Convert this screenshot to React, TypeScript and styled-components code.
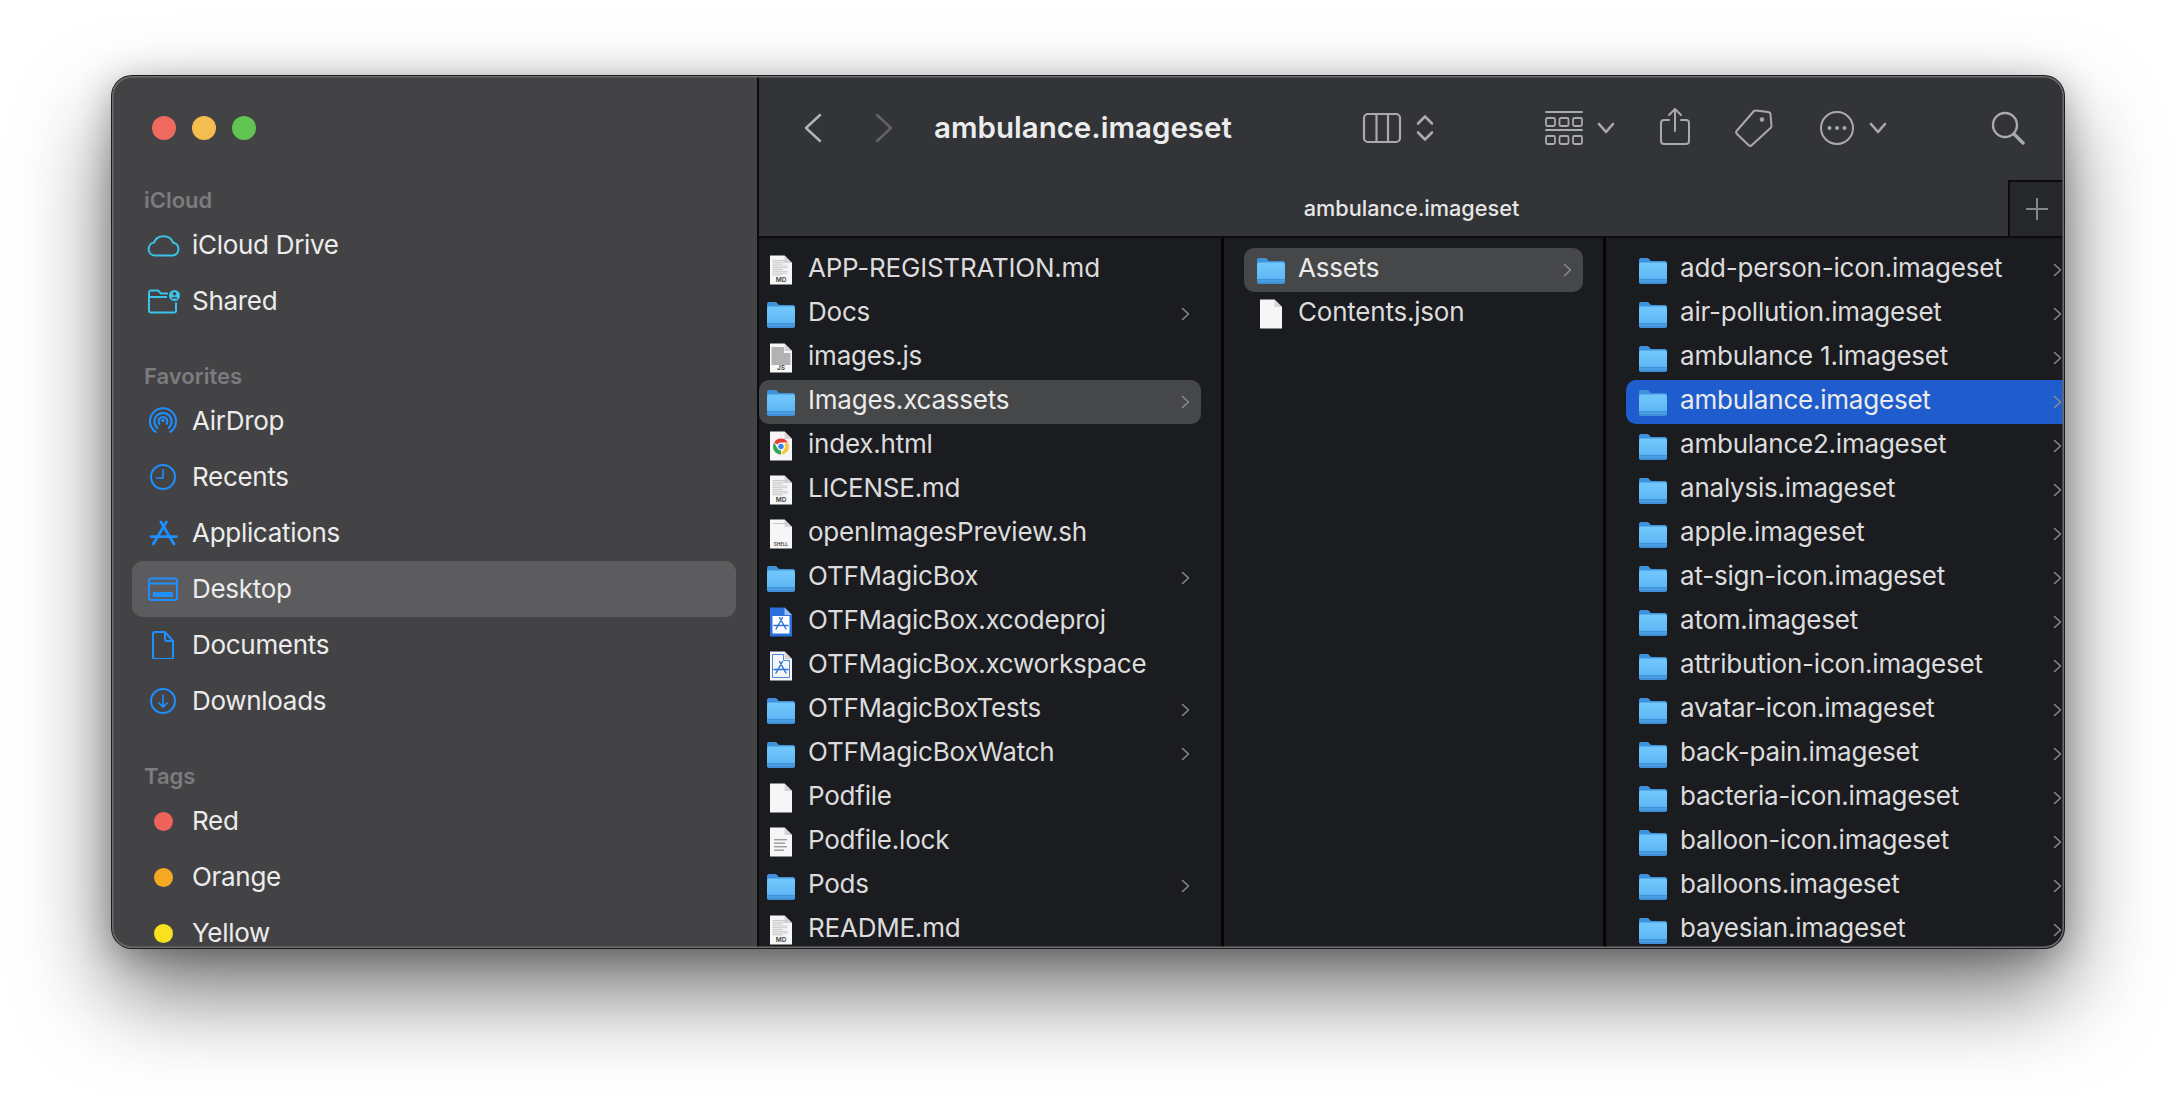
import React from 'react';
import styled, { createGlobalStyle } from 'styled-components';

const GlobalStyle = createGlobalStyle`
  html, body {
    margin: 0;
    background: #fff;
  }
  body {
    font-family: Inter, "Noto Sans", "Liberation Sans", sans-serif;
  }
`;

type DocKind = 'md' | 'js' | 'shell' | 'plain' | 'lines' | 'chrome' | 'proj' | 'workspace';

interface Entry {
  name: string;
  icon: 'folder' | DocKind;
  selected?: boolean;
}

const firstColumn: Entry[] = [
  { name: 'APP-REGISTRATION.md', icon: 'md' },
  { name: 'Docs', icon: 'folder' },
  { name: 'images.js', icon: 'js' },
  { name: 'Images.xcassets', icon: 'folder', selected: true },
  { name: 'index.html', icon: 'chrome' },
  { name: 'LICENSE.md', icon: 'md' },
  { name: 'openImagesPreview.sh', icon: 'shell' },
  { name: 'OTFMagicBox', icon: 'folder' },
  { name: 'OTFMagicBox.xcodeproj', icon: 'proj' },
  { name: 'OTFMagicBox.xcworkspace', icon: 'workspace' },
  { name: 'OTFMagicBoxTests', icon: 'folder' },
  { name: 'OTFMagicBoxWatch', icon: 'folder' },
  { name: 'Podfile', icon: 'plain' },
  { name: 'Podfile.lock', icon: 'lines' },
  { name: 'Pods', icon: 'folder' },
  { name: 'README.md', icon: 'md' },
];

const secondColumn: Entry[] = [
  { name: 'Assets', icon: 'folder', selected: true },
  { name: 'Contents.json', icon: 'plain' },
];

const thirdColumn: Entry[] = [
  'add-person-icon.imageset',
  'air-pollution.imageset',
  'ambulance 1.imageset',
  'ambulance.imageset',
  'ambulance2.imageset',
  'analysis.imageset',
  'apple.imageset',
  'at-sign-icon.imageset',
  'atom.imageset',
  'attribution-icon.imageset',
  'avatar-icon.imageset',
  'back-pain.imageset',
  'bacteria-icon.imageset',
  'balloon-icon.imageset',
  'balloons.imageset',
  'bayesian.imageset',
].map((name) => ({ name, icon: 'folder' as const, selected: name === 'ambulance.imageset' }));

const FolderIcon = () => (
  <svg width="28" height="27" viewBox="0 0 28 27">
    <defs>
      <linearGradient id="folderBody" x1="0" y1="0" x2="0" y2="1">
        <stop offset="0" stopColor="#72c8fc" />
        <stop offset="1" stopColor="#58b3f2" />
      </linearGradient>
    </defs>
    <path d="M0 3a2 2 0 0 1 2-2h7l3 3h14a2 2 0 0 1 2 2v6H0z" fill="#3f93dc" />
    <rect y="5.5" width="28" height="21" rx="2" fill="url(#folderBody)" />
    <path d="M0 22h28v3a2 2 0 0 1-2 2H2a2 2 0 0 1-2-2z" fill="#3f90d6" />
    <rect y="23.5" width="28" height="1" fill="#57a9e6" />
  </svg>
);

const DocLines = ({ rows, from = 5 }: { rows: number; from?: number }) => (
  <>
    {Array.from({ length: rows }, (_, i) => (
      <rect key={i} x="3.5" y={from + i * 1.8} width={i % 3 === 2 ? 10 : 15} height="1" fill="#c9c9c9" />
    ))}
  </>
);

const DocBadge = ({ label, size }: { label: string; size: number }) => (
  <text x="12" y="26.5" textAnchor="middle" fontSize={size} fontWeight="600" fill="#3c3c3c" fontFamily="Inter, sans-serif">
    {label}
  </text>
);

const AppGlyph = ({ color }: { color: string }) => (
  <g stroke={color} strokeWidth="1.4" strokeLinecap="round" fill="none">
    <path d="M10.500 10.500L17 22M13.500 10.500L7 22M5 18.500h14" />
  </g>
);

const DocIcon = ({ kind }: { kind: DocKind }) => (
  <svg width="24" height="30" viewBox="0 0 24 30">
    <path d="M1 .5h14.5L23 8v21.5H1z" fill={kind === 'proj' ? '#2a6fdc' : '#f6f6f6'} />
    <path d="M15.5 .5V8H23z" fill={kind === 'proj' ? '#9cc1f4' : '#d4d4d4'} />
    {kind === 'md' && (
      <>
        <DocLines rows={9} />
        <DocBadge label="MD" size={6.5} />
      </>
    )}
    {kind === 'js' && (
      <>
        <rect x="2.5" y="4" width="12.5" height="6" fill="#b2b2b2" />
        <rect x="2.5" y="10" width="19" height="12" fill="#b2b2b2" />
        <DocBadge label="JS" size={6.5} />
      </>
    )}
    {kind === 'shell' && (
      <>
        <DocLines rows={1} from={4} />
        <DocBadge label="SHELL" size={4.6} />
      </>
    )}
    {kind === 'lines' && (
      <g fill="#9b9b9b">
        <rect x="5" y="12" width="13" height="1.4" />
        <rect x="5" y="15.5" width="11" height="1.4" />
        <rect x="5" y="19" width="13" height="1.4" />
        <rect x="5" y="22.5" width="10" height="1.4" />
      </g>
    )}
    {kind === 'chrome' && (
      <g>
        <path d="M12 7.500a8 8 0 0 1 6.900 4H12a4 4 0 0 0-3.500 2L5.100 11.500A8 8 0 0 1 12 7.500z" fill="#e44134" />
        <path d="M18.900 11.500a8 8 0 0 1-6.900 12l3.400-6a4 4 0 0 0 0-4z" fill="#f8c73a" />
        <path d="M12 23.500a8 8 0 0 1-6.900-12l3.400 6a4 4 0 0 0 3.500 2z" fill="#2fa551" />
        <circle cx="12" cy="15.500" r="3.400" fill="#fff" />
        <circle cx="12" cy="15.500" r="2.700" fill="#3c7ef0" />
      </g>
    )}
    {kind === 'proj' && (
      <>
        <rect x="3.500" y="9" width="17" height="17.500" fill="#fff" />
        <AppGlyph color="#2a6fdc" />
      </>
    )}
    {kind === 'workspace' && (
      <>
        <path d="M3.500 3.500h11v6h6v17h-17z" fill="none" stroke="#4a88e8" strokeWidth="1" />
        <AppGlyph color="#2a6fdc" />
      </>
    )}
  </svg>
);

const ChevronSmall = () => (
  <svg width="9" height="14" viewBox="0 0 9 14" fill="none" stroke="#8b8c8f" strokeWidth="1.500" strokeLinecap="round" strokeLinejoin="round">
    <path d="M1.500 1.500L7.500 7l-6 5.500" />
  </svg>
);

const sidebarIcons = {
  cloud: <path d="M9 24.500A6.500 6.500 0 0 1 8 11.600 A10 9 0 0 1 27 11.500 A6.600 6.600 0 0 1 27 24.500Z" />,
  shared: (
    <>
      <path d="M3 10V5.500a2 2 0 0 1 2-2h7l3 3h7M3 10h18M3 10v13.500a2 2 0 0 0 2 2h23a2 2 0 0 0 2-2v-8" />
      <circle cx="28.500" cy="8.500" r="5.500" fill="currentColor" stroke="none" />
      <circle cx="28.500" cy="6.800" r="1.700" fill="#434345" stroke="none" />
      <path d="M26 11.800a3 3 0 0 1 5 0" stroke="#434345" strokeWidth="1.600" />
    </>
  ),
  airdrop: (
    <>
      <path d="M10.500 25.500a13 13 0 1 1 13 0" />
      <path d="M12 21.500a8.600 8.600 0 1 1 10 0" />
      <path d="M14 17.500a4.400 4.400 0 1 1 6 0" />
      <circle cx="17" cy="13.500" r="1.700" fill="currentColor" stroke="none" />
    </>
  ),
  recents: (
    <>
      <circle cx="17" cy="14" r="12" />
      <path d="M17 6v9H10" strokeWidth="1.500" />
    </>
  ),
  applications: (
    <g strokeWidth="2.800" strokeLinecap="round">
      <path d="M14.900 3L28 25M20.400 3L7.300 25M5 17.700h25.500" />
    </g>
  ),
  desktop: (
    <>
      <rect x="3" y="3.500" width="28" height="21.500" rx="2.500" />
      <path d="M3 8.500h28" />
      <rect x="7" y="17" width="20" height="5" fill="currentColor" stroke="none" />
    </>
  ),
  documents: (
    <>
      <path d="M9 1h10l8 9v16a2 2 0 0 1-2 2H9a2 2 0 0 1-2-2V3a2 2 0 0 1 2-2z" />
      <path d="M19 1v7a2 2 0 0 0 2 2h6" />
    </>
  ),
  downloads: (
    <>
      <circle cx="17" cy="14" r="12" />
      <path d="M17 7.500v12M12.500 15.500l4.500 4.500 4.500-4.500" strokeWidth="1.600" />
    </>
  ),
};

type SidebarIconName = keyof typeof sidebarIcons;

const SidebarIcon = ({ name, color }: { name: SidebarIconName; color: string }) => (
  <svg width="34" height="28" viewBox="0 0 34 28" fill="none" stroke="currentColor" strokeWidth="2" style={{ color }}>
    {sidebarIcons[name]}
  </svg>
);

const toolStroke = {
  fill: 'none',
  stroke: '#a9aaac',
  strokeWidth: 2,
  strokeLinecap: 'round' as const,
  strokeLinejoin: 'round' as const,
};

const CYAN = '#3bc4e9';
const BLUE = '#1f8fff';

const rowFor = (entries: Entry[], chevronRight: number, iconLeft: number) =>
  entries.map((entry) => (
    <FileRow key={entry.name} $state={entry.selected ? (chevronRight < 6 ? 'active' : 'inactive') : 'none'} $left={iconLeft} $chevronRight={chevronRight}>
      <FileIconBox>{entry.icon === 'folder' ? <FolderIcon /> : <DocIcon kind={entry.icon} />}</FileIconBox>
      <FileName $active={!!entry.selected}>{entry.name}</FileName>
      {entry.icon === 'folder' && (
        <ChevronBox>
          <ChevronSmall />
        </ChevronBox>
      )}
    </FileRow>
  ));

export default function App() {
  return (
    <Stage>
      <GlobalStyle />
      <Window>
        <Sidebar>
          <TrafficRow>
            <TrafficLight $color="#ee6a5f" />
            <TrafficLight $color="#f5bd4f" />
            <TrafficLight $color="#61c554" />
          </TrafficRow>

          <SectionLabel>iCloud</SectionLabel>
          <SidebarRow>
            <SidebarIconBox><SidebarIcon name="cloud" color={CYAN} /></SidebarIconBox>
            <SidebarText>iCloud Drive</SidebarText>
          </SidebarRow>
          <SidebarRow>
            <SidebarIconBox><SidebarIcon name="shared" color={CYAN} /></SidebarIconBox>
            <SidebarText>Shared</SidebarText>
          </SidebarRow>

          <SectionLabel $spaced>Favorites</SectionLabel>
          <SidebarRow>
            <SidebarIconBox><SidebarIcon name="airdrop" color={BLUE} /></SidebarIconBox>
            <SidebarText>AirDrop</SidebarText>
          </SidebarRow>
          <SidebarRow>
            <SidebarIconBox><SidebarIcon name="recents" color={BLUE} /></SidebarIconBox>
            <SidebarText>Recents</SidebarText>
          </SidebarRow>
          <SidebarRow>
            <SidebarIconBox><SidebarIcon name="applications" color={BLUE} /></SidebarIconBox>
            <SidebarText>Applications</SidebarText>
          </SidebarRow>
          <SidebarRow $selected>
            <SidebarIconBox><SidebarIcon name="desktop" color={BLUE} /></SidebarIconBox>
            <SidebarText>Desktop</SidebarText>
          </SidebarRow>
          <SidebarRow>
            <SidebarIconBox><SidebarIcon name="documents" color={BLUE} /></SidebarIconBox>
            <SidebarText>Documents</SidebarText>
          </SidebarRow>
          <SidebarRow>
            <SidebarIconBox><SidebarIcon name="downloads" color={BLUE} /></SidebarIconBox>
            <SidebarText>Downloads</SidebarText>
          </SidebarRow>

          <SectionLabel $spaced>Tags</SectionLabel>
          <SidebarRow>
            <SidebarIconBox><TagDot $color="#ef6259" /></SidebarIconBox>
            <SidebarText>Red</SidebarText>
          </SidebarRow>
          <SidebarRow>
            <SidebarIconBox><TagDot $color="#f6a723" /></SidebarIconBox>
            <SidebarText>Orange</SidebarText>
          </SidebarRow>
          <SidebarRow>
            <SidebarIconBox><TagDot $color="#f8e11e" /></SidebarIconBox>
            <SidebarText>Yellow</SidebarText>
          </SidebarRow>
        </Sidebar>

        <Main>
          <Toolbar>
            <ToolSlot $width={72} $gap={18}>
              <svg width="20" height="30" viewBox="0 0 20 30" {...toolStroke} stroke="#b4b5b7" strokeWidth={2.4}>
                <path d="M17 2L3 15l14 13" />
              </svg>
            </ToolSlot>
            <ToolSlot $width={70}>
              <svg width="20" height="30" viewBox="0 0 20 30" {...toolStroke} stroke="#636467" strokeWidth={2.4}>
                <path d="M3 2l14 13L3 28" />
              </svg>
            </ToolSlot>
            <Title>ambulance.imageset</Title>

            <ToolGroup>
              <ToolSlot $width={50}>
                <svg width="40" height="32" viewBox="0 0 40 32" {...toolStroke} strokeWidth={2.2}>
                  <rect x="2" y="2" width="36" height="28" rx="4" />
                  <path d="M14.500 2v28M26 2v28" />
                </svg>
              </ToolSlot>
              <ToolSlot $width={36}>
                <svg width="18" height="28" viewBox="0 0 18 28" {...toolStroke} strokeWidth={2.6}>
                  <path d="M2 9.500l7-7 7 7M2 18.500l7 7 7-7" />
                </svg>
              </ToolSlot>
              <ToolSlot $width={60} $gap={91}>
                <svg width="38" height="36" viewBox="0 0 38 36" {...toolStroke} strokeWidth={1.800}>
                  <path d="M1 2h36M1 20h36" strokeWidth={2} />
                  <rect x="1" y="8" width="9" height="8" rx="1.500" />
                  <rect x="14.500" y="8" width="9" height="8" rx="1.500" />
                  <rect x="28" y="8" width="9" height="8" rx="1.500" />
                  <rect x="1" y="26" width="9" height="8" rx="1.500" />
                  <rect x="14.500" y="26" width="9" height="8" rx="1.500" />
                  <rect x="28" y="26" width="9" height="8" rx="1.500" />
                </svg>
              </ToolSlot>
              <ToolSlot $width={24}>
                <svg width="18" height="12" viewBox="0 0 18 12" {...toolStroke} strokeWidth={2.600}>
                  <path d="M2 2l7 8 7-8" />
                </svg>
              </ToolSlot>
              <ToolSlot $width={40} $gap={37}>
                <ShareIconBox>
                  <svg width="30" height="38" viewBox="0 0 30 38" {...toolStroke}>
                    <path d="M9 13H4a3 3 0 0 0-3 3v18a3 3 0 0 0 3 3h22a3 3 0 0 0 3-3V16a3 3 0 0 0-3-3h-5M15 24V2M9 8l6-6 6 6" />
                  </svg>
                </ShareIconBox>
              </ToolSlot>
              <ToolSlot $width={40} $gap={39}>
                <svg width="38" height="38" viewBox="0 0 38 38" {...toolStroke}>
                  <path d="M21 1.500l12 1.500a2.500 2.500 0 0 1 2.500 2.500l1 11a3 3 0 0 1-1 2.500L17 36a2.500 2.500 0 0 1-3.500 0L2 25a2.500 2.500 0 0 1 0-3.500L18.500 2.500a3 3 0 0 1 2.500-1z" />
                  <circle cx="27" cy="10.500" r="2.200" fill="#a9aaac" stroke="none" />
                </svg>
              </ToolSlot>
              <ToolSlot $width={40} $gap={43}>
                <svg width="36" height="36" viewBox="0 0 36 36" {...toolStroke}>
                  <circle cx="18" cy="18" r="16" />
                  <circle cx="10.500" cy="18" r="2" fill="#a9aaac" stroke="none" />
                  <circle cx="18" cy="18" r="2" fill="#a9aaac" stroke="none" />
                  <circle cx="25.500" cy="18" r="2" fill="#a9aaac" stroke="none" />
                </svg>
              </ToolSlot>
              <ToolSlot $width={24} $gap={9}>
                <svg width="18" height="12" viewBox="0 0 18 12" {...toolStroke} strokeWidth={2.600}>
                  <path d="M2 2l7 8 7-8" />
                </svg>
              </ToolSlot>
              <ToolSlot $width={40} $gap={98}>
                <svg width="34" height="34" viewBox="0 0 34 34" {...toolStroke} strokeWidth={2.400}>
                  <circle cx="14" cy="14" r="12" />
                  <path d="M23 23l9 9" strokeWidth={3.400} />
                </svg>
              </ToolSlot>
            </ToolGroup>
          </Toolbar>

          <TabBar>
            <TabLabel>ambulance.imageset</TabLabel>
            <AddTab>
              <svg width="22" height="24" viewBox="0 0 22 24" fill="none" stroke="#85868a" strokeWidth="2">
                <path d="M11 1v22M0 12h22" />
              </svg>
            </AddTab>
          </TabBar>

          <Columns>
            <Column $width={465} $padding="0 20px 0 0">{rowFor(firstColumn, 11, 4)}</Column>
            <Column $width={382} $padding="0 20px">{rowFor(secondColumn, 11, 9)}</Column>
            <Column $padding="0 0 0 20px" $last>{rowFor(thirdColumn, 2, 9)}</Column>
          </Columns>
        </Main>
      </Window>
    </Stage>
  );
}

const Stage = styled.div`
  width: 2176px;
  height: 1096px;
  box-sizing: border-box;
  padding: 76px 112px 0;
  overflow: hidden;
`;

const Window = styled.div`
  width: 1952px;
  height: 872px;
  display: flex;
  border-radius: 20px;
  overflow: hidden;
  background: #434345;
  box-shadow: 0 0 0 1px #1c1c1e, 0 44px 90px rgba(0, 0, 0, 0.55), 0 6px 34px rgba(0, 0, 0, 0.28);
  position: relative;

  &::after {
    content: '';
    position: absolute;
    inset: 0;
    border-radius: 20px;
    box-shadow: inset 0 0 0 1.500px #6d6d70;
    pointer-events: none;
  }
`;

const Sidebar = styled.aside`
  flex: 0 0 645px;
  box-sizing: border-box;
  background: #434345;
  overflow: hidden;
`;

const TrafficRow = styled.div`
  height: 104px;
  padding-left: 40px;
  margin-bottom: 5px;
  display: flex;
  align-items: center;
  gap: 16px;
`;

const TrafficLight = styled.span<{ $color: string }>`
  width: 24px;
  height: 24px;
  border-radius: 50%;
  background: ${({ $color }) => $color};
`;

const SectionLabel = styled.div<{ $spaced?: boolean }>`
  height: 32px;
  line-height: 30px;
  margin-top: ${({ $spaced }) => ($spaced ? 32 : 0)}px;
  padding-left: 32px;
  font-size: 22px;
  font-weight: 600;
  color: #7c7c7f;
`;

const SidebarRow = styled.div<{ $selected?: boolean }>`
  height: 56px;
  margin: 0 21px 0 20px;
  padding-left: 14px;
  display: flex;
  align-items: center;
  gap: 12px;
  border-radius: 11px;
  background: ${({ $selected }) => ($selected ? '#5c5c5e' : 'transparent')};
`;

const SidebarText = styled.span`
  padding-bottom: 2px;
  font-size: 26px;
  letter-spacing: -0.3px;
  color: #ececec;
`;

const SidebarIconBox = styled.span`
  flex: 0 0 34px;
  display: flex;
  justify-content: center;
  align-items: center;
`;

const TagDot = styled.span<{ $color: string }>`
  width: 19px;
  height: 19px;
  border-radius: 50%;
  background: ${({ $color }) => $color};
`;

const Main = styled.div`
  flex: 1;
  min-width: 0;
  display: flex;
  flex-direction: column;
  border-left: 2px solid #0c0c0d;
  background: #333437;
`;

const Toolbar = styled.div`
  height: 104px;
  display: flex;
  align-items: center;
`;

const ToolSlot = styled.div<{ $width: number; $gap?: number }>`
  flex: 0 0 ${({ $width }) => $width}px;
  margin-left: ${({ $gap }) => $gap ?? 0}px;
  display: flex;
  justify-content: center;
  align-items: center;
`;

const ShareIconBox = styled.span`
  display: flex;
  margin-bottom: 4px;
`;

const Title = styled.div`
  margin-left: 15px;
  padding-bottom: 2px;
  font-size: 29.5px;
  font-weight: 600;
  color: #ececec;
  white-space: nowrap;
`;

const ToolGroup = styled.div`
  margin-left: auto;
  padding-right: 36px;
  display: flex;
  align-items: center;
`;

const TabBar = styled.div`
  position: relative;
  height: 56px;
  display: flex;
  border-bottom: 2px solid #0c0c0d;
`;

const TabLabel = styled.div`
  flex: 1;
  display: flex;
  align-items: center;
  justify-content: center;
  font-size: 21.7px;
  font-weight: 500;
  color: #e6e6e6;
`;

const AddTab = styled.div`
  position: absolute;
  top: 0;
  right: 0;
  bottom: 0;
  width: 56px;
  display: flex;
  align-items: center;
  justify-content: center;
  background: #26272a;
  border-left: 2px solid #0c0c0d;
  border-top: 2px solid #0c0c0d;
  box-sizing: border-box;
`;

const Columns = styled.div`
  flex: 1;
  min-height: 0;
  display: flex;
  background: #1b1c20;
`;

const Column = styled.div<{ $width?: number; $padding: string; $last?: boolean }>`
  ${({ $width }) => ($width ? `flex: 0 0 ${$width}px;` : 'flex: 1; min-width: 0;')}
  box-sizing: border-box;
  padding: ${({ $padding }) => $padding};
  padding-top: 10px;
  border-right: ${({ $last }) => ($last ? 'none' : '3px solid #050506')};
  overflow: hidden;
`;

const FileRow = styled.div<{ $state: 'none' | 'inactive' | 'active'; $left: number; $chevronRight: number }>`
  height: 44px;
  padding: 0 ${({ $chevronRight }) => $chevronRight}px 0 ${({ $left }) => $left}px;
  display: flex;
  align-items: center;
  gap: 9px;
  background: ${({ $state }) =>
    $state === 'active' ? '#1f5ccd' : $state === 'inactive' ? '#464748' : 'transparent'};
  border-radius: ${({ $chevronRight }) => ($chevronRight < 6 ? '10px 0 0 10px' : '10px')};
`;

const FileIconBox = styled.span`
  flex: 0 0 36px;
  display: flex;
  justify-content: center;
  align-items: center;
`;

const FileName = styled.span<{ $active: boolean }>`
  padding-bottom: 5px;
  font-size: 26px;
  letter-spacing: -0.22px;
  color: ${({ $active }) => ($active ? '#ebebeb' : '#dcdcdc')};
  white-space: nowrap;
`;

const ChevronBox = styled.span`
  margin-left: auto;
  display: flex;
  align-items: center;
`;
